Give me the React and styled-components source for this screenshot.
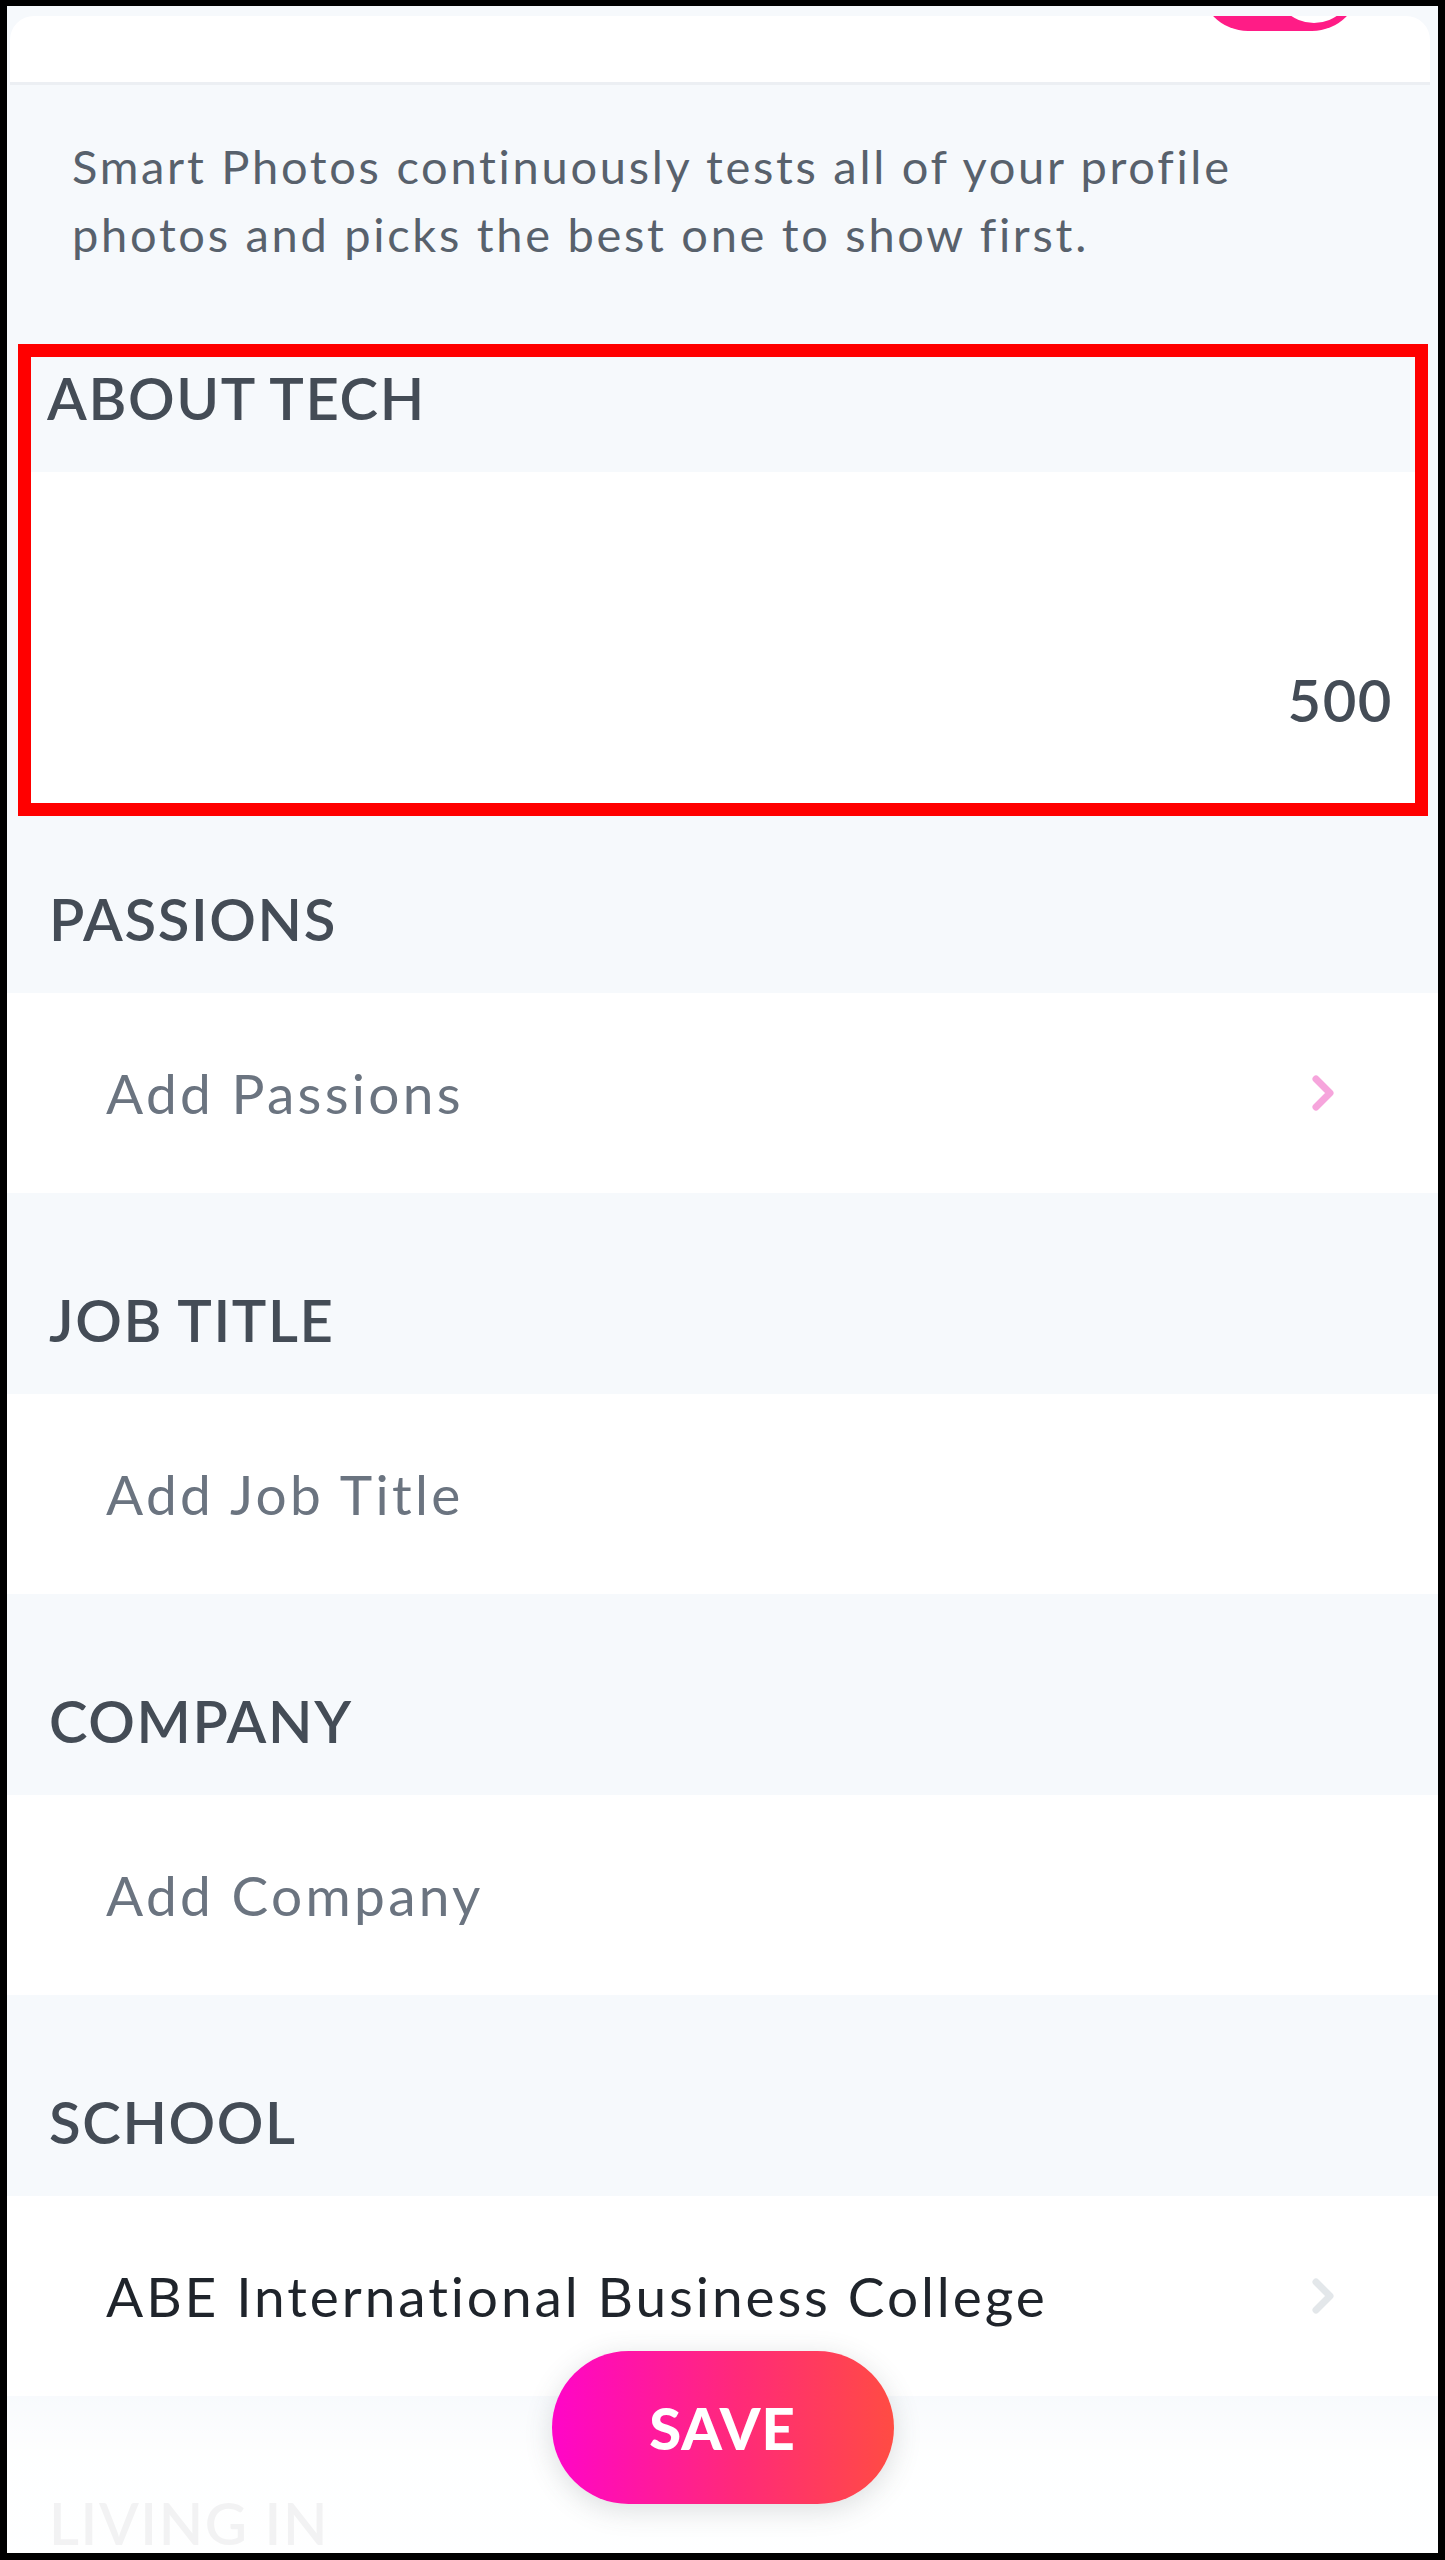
import styled, { createGlobalStyle } from "styled-components";

const GlobalStyle = createGlobalStyle`
  body {
    margin: 0;
    background: #ffffff;
    font-family: Lato, "Open Sans", sans-serif;
  }
`;

const Frame = styled.div`
  position: relative;
  width: 1445px;
  height: 2560px;
  box-sizing: border-box;
  border: 7px solid #000000;
  border-top-width: 6px;
  background: #f6f9fc;
  overflow: hidden;
`;

const HeaderCard = styled.div`
  margin: 10px 8px 0 3px;
  height: 66px;
  background: #ffffff;
  border-radius: 24px 24px 0 0;
  border-bottom: 3px solid #eceff3;
  display: flex;
  justify-content: flex-end;
  overflow: hidden;
  padding-right: 70px;
`;

const Toggle = styled.div`
  position: relative;
  width: 160px;
  height: 96px;
  margin-top: -81px;
  border-radius: 48px;
  background: #ff1c86;
`;

const Knob = styled.div`
  position: absolute;
  right: 6px;
  bottom: 8px;
  width: 80px;
  height: 80px;
  border-radius: 50%;
  background: #ffffff;
`;

const Description = styled.p`
  margin: 0;
  padding: 47px 0 76px 65px;
  font-size: 47px;
  line-height: 68px;
  letter-spacing: 2.7px;
  color: #58616c;
  max-width: 1200px;
`;

const Highlight = styled.section`
  margin: 0 10px 0 11px;
  border: 13px solid #ff0000;
`;

const SectionHeader = styled.div`
  height: ${(p) => p.$height}px;
  box-sizing: border-box;
  display: flex;
  align-items: flex-end;
  padding: 0 0 39px ${(p) => p.$indent}px;
  background: #f6f9fc;
`;

const Label = styled.h3`
  margin: 0;
  font-size: 58px;
  line-height: 70px;
  font-weight: 600;
  color: #444c56;
  letter-spacing: 1.6px;
`;

const AboutBody = styled.div`
  height: 331px;
  box-sizing: border-box;
  background: #ffffff;
  display: flex;
  align-items: flex-end;
  justify-content: flex-end;
  padding: 0 22px 68px 0;
`;

const Counter = styled.span`
  font-size: 58px;
  line-height: 70px;
  font-weight: 600;
  letter-spacing: 1.5px;
  color: #444c56;
`;

const Row = styled.div`
  height: 200px;
  box-sizing: border-box;
  display: flex;
  align-items: center;
  justify-content: space-between;
  padding: 0 104px 0 99px;
  background: #ffffff;
`;

const RowText = styled.span`
  font-size: 55px;
  letter-spacing: ${(p) => (p.$filled ? 2.9 : 3.3)}px;
  color: ${(p) => (p.$filled ? "#1f242b" : "#6b7480")};
`;

const Footer = styled.div`
  position: absolute;
  left: 0;
  right: 0;
  bottom: 0;
  height: 175px;
  background: linear-gradient(
    to bottom,
    rgba(255, 255, 255, 0) 0%,
    rgba(255, 255, 255, 0.93) 45%,
    rgba(255, 255, 255, 0.93) 100%
  );
`;

const SaveButton = styled.button`
  position: absolute;
  left: 50%;
  bottom: 49px;
  transform: translateX(-50%);
  width: 342px;
  height: 153px;
  border: none;
  border-radius: 77px;
  background: linear-gradient(90deg, #ff05c8 0%, #ff2a78 55%, #ff4c43 100%);
  box-shadow: 0 6px 28px rgba(60, 70, 80, 0.18);
  color: #ffffff;
  font-family: Lato, "Open Sans", sans-serif;
  font-size: 58px;
  font-weight: 900;
  letter-spacing: 1px;
`;

function Chevron({ color }) {
  return (
    <svg width="22" height="36" viewBox="0 0 22 36">
      <polyline
        points="4,4 18,18 4,32"
        fill="none"
        stroke={color}
        strokeWidth="7"
        strokeLinecap="round"
        strokeLinejoin="round"
      />
    </svg>
  );
}

const sections = [
  { label: "PASSIONS", header: 177, text: "Add Passions", chevron: "#f6a5dc" },
  { label: "JOB TITLE", header: 201, text: "Add Job Title" },
  { label: "COMPANY", header: 201, text: "Add Company" },
  {
    label: "SCHOOL",
    header: 201,
    text: "ABE International Business College",
    filled: true,
    chevron: "#e3e7ea",
  },
  { label: "LIVING IN", header: 201 },
];

function App() {
  return (
    <Frame>
      <GlobalStyle />
      <HeaderCard>
        <Toggle>
          <Knob />
        </Toggle>
      </HeaderCard>
      <Description>
        Smart Photos continuously tests all of your profile photos and picks
        the best one to show first.
      </Description>
      <Highlight>
        <SectionHeader $height={115} $indent={16}>
          <Label>ABOUT TECH</Label>
        </SectionHeader>
        <AboutBody>
          <Counter>500</Counter>
        </AboutBody>
      </Highlight>
      {sections.map((s) => (
        <div key={s.label}>
          <SectionHeader $height={s.header} $indent={42}>
            <Label>{s.label}</Label>
          </SectionHeader>
          {s.text && (
            <Row>
              <RowText $filled={s.filled}>{s.text}</RowText>
              {s.chevron && <Chevron color={s.chevron} />}
            </Row>
          )}
        </div>
      ))}
      <Footer />
      <SaveButton>SAVE</SaveButton>
    </Frame>
  );
}

export default App;
